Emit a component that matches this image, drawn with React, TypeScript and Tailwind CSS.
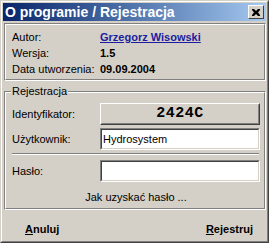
import React from "react";

function Etched({ className = "", children }: { className?: string; children?: React.ReactNode }) {
  return (
    <div className={`border-t border-l border-t-[#808080] border-l-[#808080] border-b border-r border-b-white border-r-white ${className}`}>
      <div className="border-t border-l border-t-white border-l-white border-b border-r border-b-[#808080] border-r-[#808080] h-full">
        {children}
      </div>
    </div>
  );
}

function Sunken({ children }: { children?: React.ReactNode }) {
  return (
    <div className="h-[22px] w-[160px] border border-t-[#808080] border-l-[#808080] border-b-white border-r-white">
      <div className="h-full border border-t-[#404040] border-l-[#404040] border-b-[#D4D0C8] border-r-[#D4D0C8] bg-white flex items-center pl-[1px] text-[11px] text-black leading-none">
        {children}
      </div>
    </div>
  );
}

export default function App() {
  return (
    <div className="w-[269px] h-[243px] bg-[#D4D0C8] border border-t-[#D4D0C8] border-l-[#D4D0C8] border-b-[#404040] border-r-[#404040] font-['Liberation_Sans',sans-serif]">
      <div className="h-full border border-t-white border-l-white border-b-[#808080] border-r-[#808080] p-px flex flex-col">
        {/* title bar */}
        <div className="h-[18px] flex items-center justify-between bg-gradient-to-r from-[#0A246A] to-[#A6CAF0] pl-[2px] pr-[2px]">
          <span className="text-white font-bold text-[14px] leading-none">O programie / Rejestracja</span>
          <div className="w-[16px] h-[14px] border border-t-white border-l-white border-b-[#404040] border-r-[#404040] bg-[#D4D0C8] flex items-center justify-center">
            <svg width="8" height="7" viewBox="0 0 8 7">
              <path d="M0 0h2l2 2 2-2h2v1L6 3.5 8 6v1H6L4 5 2 7H0V6l2-2.5L0 1z" fill="black" />
            </svg>
          </div>
        </div>

        {/* info panel */}
        <Etched className="mt-[2px] ml-px h-[58px]">
          <div className="pl-[6px] pt-[4px] text-[11px] text-black">
            <div className="flex h-[16px] items-center">
              <span className="w-[88px]">Autor:</span>
              <span className="font-bold text-[#1C1CA0] underline">Grzegorz Wisowski</span>
            </div>
            <div className="flex h-[16px] items-center">
              <span className="w-[88px]">Wersja:</span>
              <span className="font-bold">1.5</span>
            </div>
            <div className="flex h-[16px] items-center">
              <span className="w-[88px]">Data utworzenia:</span>
              <span className="font-bold">09.09.2004</span>
            </div>
          </div>
        </Etched>

        {/* registration group */}
        <div className="relative mt-[10px] ml-px">
          <Etched className="h-[119px]">
            <div className="pl-[6px] pr-[4px] pt-[10px] text-[11px] text-black">
              <div className="flex items-center h-[22px]">
                <span className="w-[88px]">Identyfikator:</span>
                <div className="h-[22px] w-[160px] border border-t-white border-l-white border-b-[#404040] border-r-[#404040]">
                  <div className="h-full border border-t-[#D4D0C8] border-l-[#D4D0C8] border-b-[#808080] border-r-[#808080] flex items-center justify-center">
                    <span className="font-bold text-[15px] font-['Liberation_Mono',monospace] tracking-[0.5px]">2424C</span>
                  </div>
                </div>
              </div>
              <div className="flex items-center h-[22px] mt-[3px]">
                <span className="w-[88px]">Użytkownik:</span>
                <Sunken>Hydrosystem</Sunken>
              </div>
              <div className="mt-[3px] mr-[1px] h-[2px] border-t border-t-[#808080] border-b border-b-white" />
              <div className="flex items-center h-[22px] mt-[5px]">
                <span className="w-[88px]">Hasło:</span>
                <Sunken />
              </div>
              <div className="text-center h-[31px] flex items-center justify-center">Jak uzyskać hasło ...</div>
            </div>
          </Etched>
          <span className="absolute left-[7px] top-[-7px] bg-[#D4D0C8] px-px text-[11px] leading-[14px] text-black">Rejestracja</span>
        </div>

        {/* buttons */}
        <div className="flex-1 flex items-start justify-between pt-[13px] pl-[22px] pr-[13px] text-[11px] font-bold text-black leading-[13px]">
          <span><span className="underline">A</span>nuluj</span>
          <span><span className="underline">R</span>ejestruj</span>
        </div>
      </div>
    </div>
  );
}
